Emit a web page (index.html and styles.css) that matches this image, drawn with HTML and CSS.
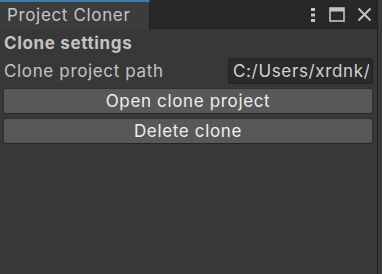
FILE: index.html
```html
<!DOCTYPE html>
<html>
<head>
<meta charset="utf-8">
<link rel="stylesheet" href="styles.css">
</head>
<body>
<div class="window">
  <div class="tabbar">
    <div class="tab">Project Cloner</div>
    <div class="tab-tools">
      <svg class="icon" width="8" height="16" viewBox="0 0 8 16"><rect x="2" y="1" width="4" height="3" fill="#c4c4c4"/><rect x="2" y="6.5" width="4" height="3" fill="#c4c4c4"/><rect x="2" y="12" width="4" height="3" fill="#c4c4c4"/></svg>
      <svg class="icon" width="16" height="15" viewBox="0 0 16 15"><rect x="1" y="1" width="14" height="13" fill="none" stroke="#c4c4c4" stroke-width="1.6"/><rect x="1" y="1" width="14" height="3.5" fill="#c4c4c4"/></svg>
      <svg class="icon" width="15" height="15" viewBox="0 0 15 15"><path d="M1.5 1.5 L13.5 13.5 M13.5 1.5 L1.5 13.5" stroke="#c4c4c4" stroke-width="2"/></svg>
    </div>
  </div>
  <div class="content">
    <div class="heading">Clone settings</div>
    <div class="field-row">
      <span class="label">Clone project path</span>
      <div class="textfield"><span class="textfield-inner">C:/Users/xrdnk/ProjectCloner_clone</span></div>
    </div>
    <div class="button">Open clone project</div>
    <div class="button">Delete clone</div>
  </div>
</div>
</body>
</html>
```
FILE: styles.css
```css
html, body {
  margin: 0;
  padding: 0;
  background: #3a3a3a;
}
body {
  width: 382px;
  height: 274px;
  overflow: hidden;
  font-family: Inter, "Noto Sans", sans-serif;
  color: #c4c4c4;
  letter-spacing: 0.65px;
}
.window {
  width: 377px;
  height: 274px;
  background: #383838;
  border-right: 1px solid #1f1f1f;
  display: flex;
  flex-direction: column;
}
.tabbar {
  height: 28px;
  background: #282828;
  border-bottom: 1px solid #232323;
  display: flex;
  align-items: stretch;
}
.tab {
  width: 150px;
  box-sizing: border-box;
  background: #3c3c3c;
  border-top: 2px solid #3a79bb;
  border-right: 1px solid #1e1e1e;
  font-size: 17px;
  line-height: 26px;
  padding-left: 7px;
  color: #c4c4c4;
  margin-bottom: -1px;
}
.tab-tools {
  margin-left: auto;
  display: flex;
  align-items: center;
  gap: 12px;
  padding-right: 5px;
  padding-top: 1px;
}
.icon { display: block; }
.content {
  padding: 2px 4px 0 3px;
  display: flex;
  flex-direction: column;
}
.heading {
  font-weight: bold;
  font-size: 17px;
  line-height: 25px;
  padding-left: 1px;
}
.field-row {
  display: flex;
  align-items: center;
  height: 26px;
  margin-top: 2px;
}
.label {
  font-size: 17px;
  padding-left: 1px;
  flex: 1;
}
.textfield {
  width: 145px;
  height: 26px;
  box-sizing: border-box;
  background: #2a2a2a;
  border: 1px solid #212121;
  border-radius: 3px;
  font-size: 17px;
  line-height: 24px;
  padding: 0 3px 0 4px;
  color: #d2d2d2;
  display: flex;
}
.textfield-inner {
  display: block;
  flex: 1;
  white-space: nowrap;
  overflow: hidden;
}
.button {
  margin-top: 4px;
  height: 26px;
  box-sizing: border-box;
  background: #585858;
  border: 1px solid #303030;
  border-bottom-color: #242424;
  border-radius: 3px;
  font-size: 17px;
  line-height: 24px;
  text-align: center;
  color: #eeeeee;
}
```
